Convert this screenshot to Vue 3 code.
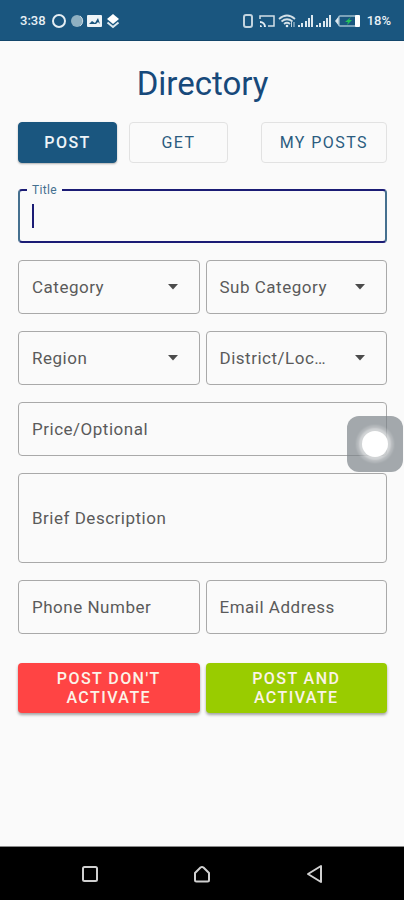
<script setup>
import { ref, reactive } from "vue";

const tab = ref("post");
const active = ref("title");
const form = reactive({
  title: "",
  category: "",
  subCategory: "",
  region: "",
  district: "",
  price: "",
  description: "",
  phone: "",
  email: "",
});

const tabs = [
  { id: "post", label: "POST" },
  { id: "get", label: "GET" },
  { id: "mine", label: "MY POSTS" },
];

const selects = [
  { id: "category", label: "Category" },
  { id: "subCategory", label: "Sub Category" },
  { id: "region", label: "Region" },
  { id: "district", label: "District/Loc…" },
];

const contacts = [
  { id: "phone", label: "Phone Number", type: "tel" },
  { id: "email", label: "Email Address", type: "email" },
];

function floats(id) {
  return active.value === id || form[id] !== "";
}
</script>

<template>
  <div class="screen">
    <header class="status">
      <span>3:38</span>
      <svg width="68" height="16" viewBox="0 0 68 16">
        <circle cx="7" cy="8" r="6" fill="none" stroke="#e4edf3" stroke-width="2" />
        <circle cx="25" cy="8" r="6" fill="#8fb0c2" />
        <path d="M28 3a6 6 0 0 1 0 10" fill="none" stroke="#c9dae4" stroke-width="1" />
        <rect x="35" y="2" width="15" height="12" rx="1" fill="#eef4f8" />
        <path d="M37 11l3-3 3 2 3-5 2 6-2-2-2 2z" fill="#1a567f" />
        <path d="M61 1l6 5-6 5-6-5z" fill="#fff" />
        <path d="M55.500 9.500l5.500 4.500 5.500-4.500" fill="none" stroke="#dce8ef" stroke-width="2" />
      </svg>
      <svg class="right" width="120" height="16" viewBox="0 0 120 16">
        <rect x="3" y="2" width="8" height="12" rx="2" fill="none" stroke="#c3d4df" stroke-width="2" />
        <path d="M19 6V3h14v10h-6" fill="none" stroke="#d3e0e8" stroke-width="1.500" />
        <path d="M19 8a6 6 0 0 1 6 6h-2a4 4 0 0 0-4-4zM19 12a2 2 0 0 1 2 2h-2z" fill="#e4edf3" />
        <g fill="none" stroke="#d3e0e8" stroke-width="1.700">
          <path d="M38 6q8-7 16 0M40.500 8.500q5.500-4.500 11 0M43 11q3-2.500 6 0" />
        </g>
        <circle cx="46" cy="13" r="1.300" fill="#e4edf3" />
        <path d="M50.500 9v5M53 9v5" stroke="#c3d4df" />
        <g fill="#dce8ef">
          <path d="M57 12h2v2h-2zM60 10h2v4h-2zM64 8h2v6h-2zM67 5h2v9h-2zM70 2h2v12h-2z" />
          <path d="M75 12h2v2h-2zM78 10h2v4h-2zM82 8h2v6h-2zM85 5h2v9h-2zM88 2h2v12h-2z" />
        </g>
        <path d="M98 3l-4 5 4 5z" fill="#dce8ef" />
        <rect x="98" y="3" width="20" height="10" rx="1" fill="#1a567f" stroke="#9dbccd" stroke-width="1.300" />
        <rect x="114" y="2" width="5" height="12" rx="1" fill="#fff" />
        <path d="M110 4l-6 5h3l-1 3 5-5h-3z" fill="#24c25a" />
      </svg>
      <span>18%</span>
    </header>

    <main>
      <h1>Directory</h1>

      <nav class="tabs">
        <button
          v-for="t in tabs"
          :key="t.id"
          type="button"
          class="tab"
          :class="{ selected: tab === t.id, mine: t.id === 'mine' }"
          @click="tab = t.id"
        >{{ t.label }}</button>
      </nav>

      <form @submit.prevent>
        <div class="field wide" :class="{ floating: floats('title'), focused: active === 'title' }">
          <input id="title" v-model="form.title" type="text" @focus="active = 'title'" @blur="active = ''">
          <label for="title">Title</label>
          <span v-if="active === 'title' && !form.title" class="caret"></span>
        </div>

        <div
          v-for="s in selects"
          :key="s.id"
          class="field"
          :class="{ floating: form[s.id] !== '' }"
        >
          <select :id="s.id" v-model="form[s.id]">
            <option value=""></option>
          </select>
          <label :for="s.id">{{ s.label }}</label>
          <svg class="arrow" width="10" height="6" viewBox="0 0 10 6">
            <path d="M0 0h10L5 5.500z" fill="#4b4b4b" />
          </svg>
        </div>

        <div class="field wide" :class="{ floating: floats('price'), focused: active === 'price' }">
          <input id="price" v-model="form.price" type="text" @focus="active = 'price'" @blur="active = ''">
          <label for="price">Price/Optional</label>
        </div>

        <div class="field wide tall" :class="{ floating: floats('description'), focused: active === 'description' }">
          <textarea id="description" v-model="form.description" @focus="active = 'description'" @blur="active = ''"></textarea>
          <label for="description">Brief Description</label>
        </div>

        <div
          v-for="c in contacts"
          :key="c.id"
          class="field"
          :class="{ floating: floats(c.id), focused: active === c.id }"
        >
          <input :id="c.id" v-model="form[c.id]" :type="c.type" @focus="active = c.id" @blur="active = ''">
          <label :for="c.id">{{ c.label }}</label>
        </div>

        <button type="button" class="action red">POST DON'T ACTIVATE</button>
        <button type="submit" class="action green">POST AND ACTIVATE</button>
      </form>
    </main>

    <button type="button" class="assist"><span></span></button>

    <footer class="navbar">
      <button type="button">
        <svg width="20" height="20" viewBox="0 0 20 20">
          <rect x="3" y="3" width="14" height="14" rx="1.500" />
        </svg>
      </button>
      <button type="button">
        <svg width="20" height="20" viewBox="0 0 20 20">
          <path d="M3 9L8.500 3.500q1.500-1 3 0L17 9v7q0 1.500-1.500 1.500h-11Q3 17.500 3 16z" />
        </svg>
      </button>
      <button type="button">
        <svg width="20" height="20" viewBox="0 0 20 20">
          <path d="M17 2v16L4 10z" />
        </svg>
      </button>
    </footer>
  </div>
</template>

<style>
body {
  margin: 0;
  background: #fafafa;
}
</style>

<style scoped>
.screen {
  position: relative;
  display: flex;
  flex-direction: column;
  min-height: 100vh;
  background: #fafafa;
  font-family: Roboto, "Liberation Sans", sans-serif;
}

button,
input,
select,
textarea {
  font-family: inherit;
  box-sizing: border-box;
  margin: 0;
}

button {
  cursor: pointer;
}

.status {
  display: flex;
  align-items: center;
  gap: 6px;
  box-sizing: border-box;
  height: 41px;
  padding: 1px 13px 0 20px;
  border-bottom: 1px solid #13466b;
  background: #1a567f;
  color: #e8f0f5;
  font-size: 13px;
  font-weight: 500;
}

.right {
  margin-left: auto;
}

main {
  flex: 1;
  padding: 23px 17px 30px 18px;
}

h1 {
  margin: 0 0 18px;
  color: #17497a;
  font-size: 33px;
  font-weight: 400;
  line-height: 40px;
  text-align: center;
}

.tabs {
  display: flex;
  gap: 12px;
  margin-bottom: 26px;
}

.tab {
  min-width: 99px;
  height: 41px;
  padding: 0 18px;
  border: 1px solid #e2e2e2;
  border-radius: 4px;
  background: transparent;
  color: #2b5c80;
  font-size: 16px;
  font-weight: 400;
  letter-spacing: 0.09em;
}

.tab.selected {
  border-color: #1a567f;
  background: #1a567f;
  box-shadow: 0 1px 2px rgba(0, 0, 0, 0.3);
  color: #eef4f8;
  font-weight: 500;
}

.mine {
  margin-left: auto;
}

form {
  display: grid;
  grid-template-columns: 1fr 1fr;
  gap: 17px 6px;
}

.field {
  position: relative;
  display: grid;
  grid-template-columns: minmax(0, 1fr);
  align-items: center;
  height: 54px;
}

.wide {
  grid-column: 1 / -1;
}

.tall {
  height: 90px;
}

.field > * {
  grid-area: 1 / 1;
}

.field input,
.field select,
.field textarea {
  width: 100%;
  height: 100%;
  padding: 0 14px;
  border: 1px solid #a9a9a9;
  border-radius: 4px;
  outline: none;
  background: transparent;
  color: #333;
  font-size: 17px;
  appearance: none;
  resize: none;
}

.field textarea {
  padding: 16px 14px;
}

.field label {
  justify-self: start;
  margin-left: 14px;
  color: #5a5a5a;
  font-size: 17px;
  line-height: 20px;
  letter-spacing: 0.03em;
  pointer-events: none;
}

.field.focused input,
.field.focused textarea {
  border: 2px solid #1b1c75;
  border-left-color: #45708f;
  border-right-color: #45708f;
}

.field.floating label {
  position: absolute;
  top: -7px;
  left: 9px;
  margin: 0;
  padding: 0 5px;
  background: #fafafa;
  color: #45708f;
  font-size: 12px;
  line-height: 16px;
}

.caret {
  justify-self: start;
  width: 2px;
  height: 24px;
  margin-left: 14px;
  background: #1b1c75;
  pointer-events: none;
}

.arrow {
  justify-self: end;
  margin-right: 22px;
  pointer-events: none;
}

.action {
  height: 50px;
  margin-top: 12px;
  padding: 0 30px;
  border: none;
  border-radius: 4px;
  box-shadow: 0 2px 3px rgba(0, 0, 0, 0.35);
  color: #fbf3e8;
  font-size: 16px;
  font-weight: 500;
  line-height: 19px;
  letter-spacing: 0.09em;
}

.red {
  background: #ff4444;
}

.green {
  background: #99cc00;
}

.assist {
  position: absolute;
  top: 416px;
  right: 1px;
  display: grid;
  place-items: center;
  width: 56px;
  height: 56px;
  padding: 0;
  border: none;
  border-radius: 12px;
  background: rgba(126, 132, 138, 0.7);
}

.assist span {
  width: 26px;
  height: 26px;
  border-radius: 50%;
  background: #fff;
  box-shadow: 0 0 2px 3px rgba(255, 255, 255, 0.4), 0 0 2px 6px rgba(255, 255, 255, 0.2);
}

.navbar {
  display: flex;
  justify-content: center;
  gap: 72px;
  box-sizing: border-box;
  height: 54px;
  border-top: 1px solid #8a8a8a;
  background: #000;
}

.navbar button {
  width: 40px;
  padding: 0;
  border: none;
  background: none;
}

.navbar svg {
  display: block;
  margin: auto;
  fill: none;
  stroke: #d0d0d0;
  stroke-width: 2;
  stroke-linejoin: round;
}
</style>
